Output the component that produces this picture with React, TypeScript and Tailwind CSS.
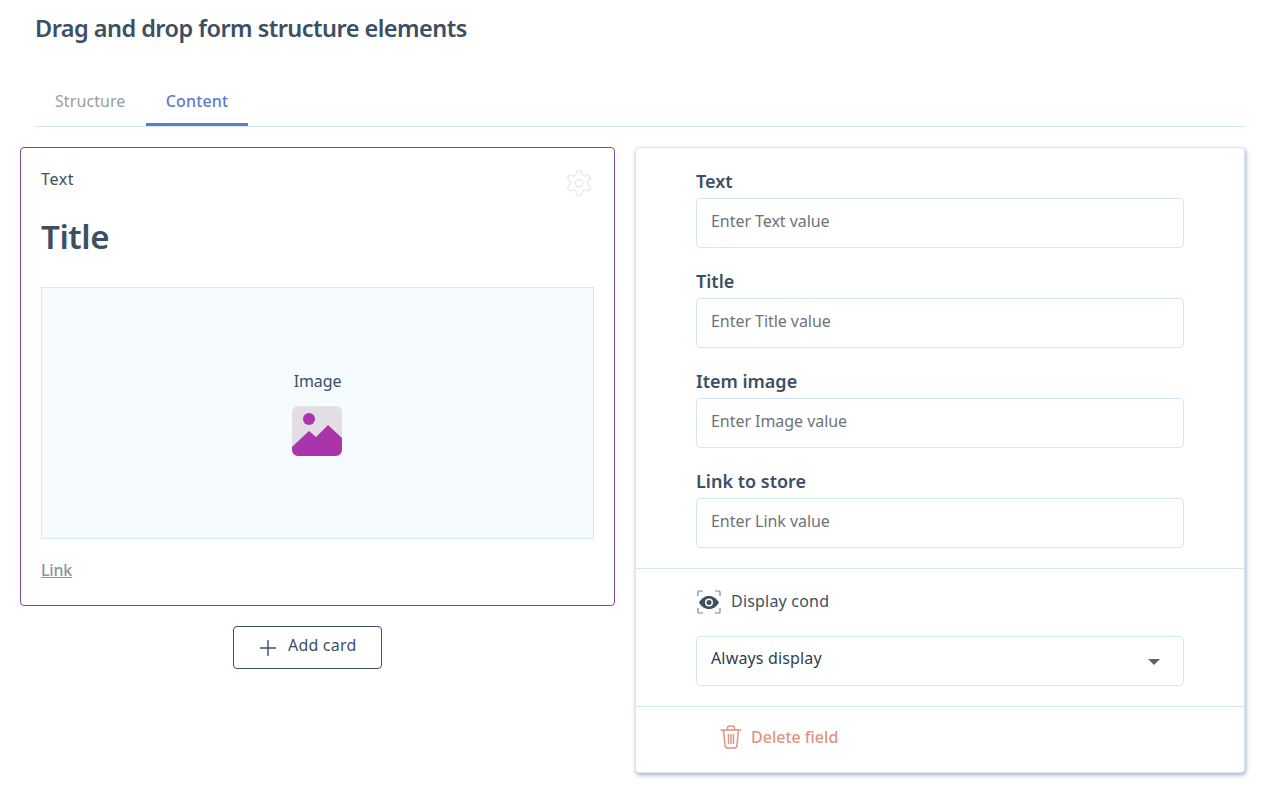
import React from "react";

const font = "[font-family:'Noto_Sans',sans-serif]";

function Field({ label, placeholder }: { label: string; placeholder: string }) {
  return (
    <div className="h-[100px]">
      <div className="h-[34px] pt-[5px] text-[18px] leading-[24px] font-semibold text-[#3d4f63]">{label}</div>
      <div className="h-[50px] w-[488px] rounded border border-[#d3e7f8] bg-white pl-[14px] pb-[5px] flex items-center text-[16px] text-[#6f7378] tracking-[-0.05px]">
        {placeholder}
      </div>
    </div>
  );
}

export default function App() {
  return (
    <div className={`${font} w-[1284px] h-[786px] bg-white overflow-hidden relative`}>
      <div className="pl-[35px] pr-[39px]">
        <h1 className="h-[78px] pt-[10px] text-[23.5px] leading-[36px] font-semibold text-[#3d4f63] tracking-[-0.54px]">
          Drag and drop form structure elements
        </h1>
        <div className="flex h-[49px] border-b border-[#d3e7f8]">
          <div className="w-[111px] pl-[20px] pt-[11px] text-[16px] leading-[24px] text-[#9a9da1] tracking-[0.08px]">Structure</div>
          <div className="w-[102px] h-[48px] pt-[11px] text-center text-[16px] leading-[24px] font-medium text-[#5a7ccf] tracking-[0.15px] border-b-[3px] border-[#5a7ccf]">Content</div>
        </div>
      </div>

      <div className="flex pl-[20px] pt-[20px] gap-[20px] items-start">
        <div className="w-[595px]">
          <div className="h-[459px] rounded border border-[#7a4a9e] px-[20px] pt-[21px] bg-white">
            <div className="flex justify-between h-[30px]">
              <span className="text-[16px] leading-[20px] text-[#3d4f63] tracking-[0.6px]">Text</span>
              <svg width="30" height="30" viewBox="0 0 24 24" fill="none" stroke="#ececec" strokeWidth="1.3" strokeLinecap="round" strokeLinejoin="round" className="-mt-[1px]">
                <path d="M12.22 2h-.44a2 2 0 0 0-2 2v.18a2 2 0 0 1-1 1.73l-.43.25a2 2 0 0 1-2 0l-.15-.08a2 2 0 0 0-2.73.73l-.22.38a2 2 0 0 0 .73 2.73l.15.1a2 2 0 0 1 1 1.72v.51a2 2 0 0 1-1 1.74l-.15.09a2 2 0 0 0-.73 2.73l.22.38a2 2 0 0 0 2.73.73l.15-.08a2 2 0 0 1 2 0l.43.25a2 2 0 0 1 1 1.73V20a2 2 0 0 0 2 2h.44a2 2 0 0 0 2-2v-.18a2 2 0 0 1 1-1.73l.43-.25a2 2 0 0 1 2 0l.15.08a2 2 0 0 0 2.73-.73l.22-.39a2 2 0 0 0-.73-2.73l-.15-.08a2 2 0 0 1-1-1.74v-.5a2 2 0 0 1 1-1.74l.15-.09a2 2 0 0 0 .73-2.73l-.22-.38a2 2 0 0 0-2.73-.73l-.15.08a2 2 0 0 1-2 0l-.43-.25a2 2 0 0 1-1-1.73V4a2 2 0 0 0-2-2z" />
                <circle cx="12" cy="12" r="3" />
              </svg>
            </div>
            <div className="h-[88px] pt-[15px] text-[33px] leading-[46px] font-semibold text-[#3d4f63] tracking-[-0.4px]">Title</div>
            <div className="h-[252px] border border-[#d3e7f8] bg-[#f5fbff] flex flex-col items-center pt-[83px]">
              <div className="text-[16px] leading-[20px] text-[#3d4f63] tracking-[-0.1px]">Image</div>
              <svg width="50" height="50" viewBox="0 0 50 50" className="mt-[15px] -ml-[2px]">
                <rect width="50" height="50" rx="6" fill="#e3dde6" />
                <circle cx="17" cy="13" r="6" fill="#a934ab" />
                <path d="M0 41 L17 25 L24 31 L36 19 L50 32 V44 a6 6 0 0 1 -6 6 H6 a6 6 0 0 1 -6 -6 Z" fill="#a934ab" />
              </svg>
            </div>
            <div className="mt-[21px] text-[16px] leading-[20px] font-medium text-[#8a949e] underline tracking-[-0.2px]">Link</div>
          </div>
          <div className="flex justify-center pr-[20px] mt-[20px]">
            <div className="w-[149px] h-[43px] rounded border border-[#3d4f63] bg-white flex items-center pl-[25px] gap-[11px] text-[#3d4f63]">
              <svg width="18" height="18" viewBox="0 0 18 18" fill="none" stroke="#3d4f63" strokeWidth="1.4"><path d="M9 1v16M1 9h16" /></svg>
              <span className="text-[16px] leading-[20px] tracking-[0.2px] -mt-[5px]">Add card</span>
            </div>
          </div>
        </div>

        <div className="w-[610px] h-[626px] rounded border border-[#d3e7f8] bg-white shadow-[1px_2px_4px_rgba(60,80,120,0.45)]">
          <div className="pl-[60px] pt-[16px] h-[420px]">
            <Field label="Text" placeholder="Enter Text value" />
            <Field label="Title" placeholder="Enter Title value" />
            <Field label="Item image" placeholder="Enter Image value" />
            <Field label="Link to store" placeholder="Enter Link value" />
          </div>
          <div className="h-[139px] border-t border-[#d3e7f8] pl-[60px]">
            <div className="h-[67px] flex items-center gap-[10px] pl-[1px] pb-[2px]">
              <svg width="24" height="24" viewBox="0 0 24 24" fill="none">
                <path d="M1 6V2a1 1 0 0 1 1-1h4M18 1h4a1 1 0 0 1 1 1v4M23 18v4a1 1 0 0 1-1 1h-4M6 23H2a1 1 0 0 1-1-1v-4" stroke="#7d8794" strokeWidth="1.2" />
                <path d="M2 12.5C5 7.5 8.5 6 12 6s7 1.5 10 6.5C19 17.5 15.5 19 12 19s-7-1.500-10-6.500Z" fill="#3d4f63" />
                <circle cx="12" cy="12.500" r="4" fill="#fff" />
                <circle cx="12" cy="12.500" r="2.500" fill="#3d4f63" />
              </svg>
              <span className="text-[16px] leading-[20px] text-[#3d4f63] tracking-[0.2px] -mt-[2px]">Display cond</span>
            </div>
            <div className="w-[488px] h-[50px] rounded border border-[#d3e7f8] flex items-center justify-between pl-[14px] pr-[23px] text-[16px] text-[#2f3d4d] tracking-[0.15px]">
              <span className="-mt-[6px]">Always display</span>
              <svg width="12" height="6" viewBox="0 0 12 6" className="mt-[2px]"><path d="M0 0h12L6 6z" fill="#5f6368" /></svg>
            </div>
          </div>
          <div className="h-[65px] border-t border-[#d3e7f8] pl-[84px] pb-[4px] flex items-center gap-[9px] -mt-[1px]">
            <svg width="22" height="24" viewBox="0 0 22 24" fill="none" stroke="#dd9482" strokeWidth="1.500" strokeLinecap="round" strokeLinejoin="round">
              <path d="M1 5h20M7.500 5V3a2 2 0 0 1 2-2h3a2 2 0 0 1 2 2v2M3.500 5l1.500 15a3 3 0 0 0 3 3h6a3 3 0 0 0 3-3l1.500-15M8.500 9.500v9M11 9.500v9M13.500 9.500v9" />
            </svg>
            <span className="text-[16px] leading-[20px] font-medium text-[#dd9482]">Delete field</span>
          </div>
        </div>
      </div>
    </div>
  );
}
